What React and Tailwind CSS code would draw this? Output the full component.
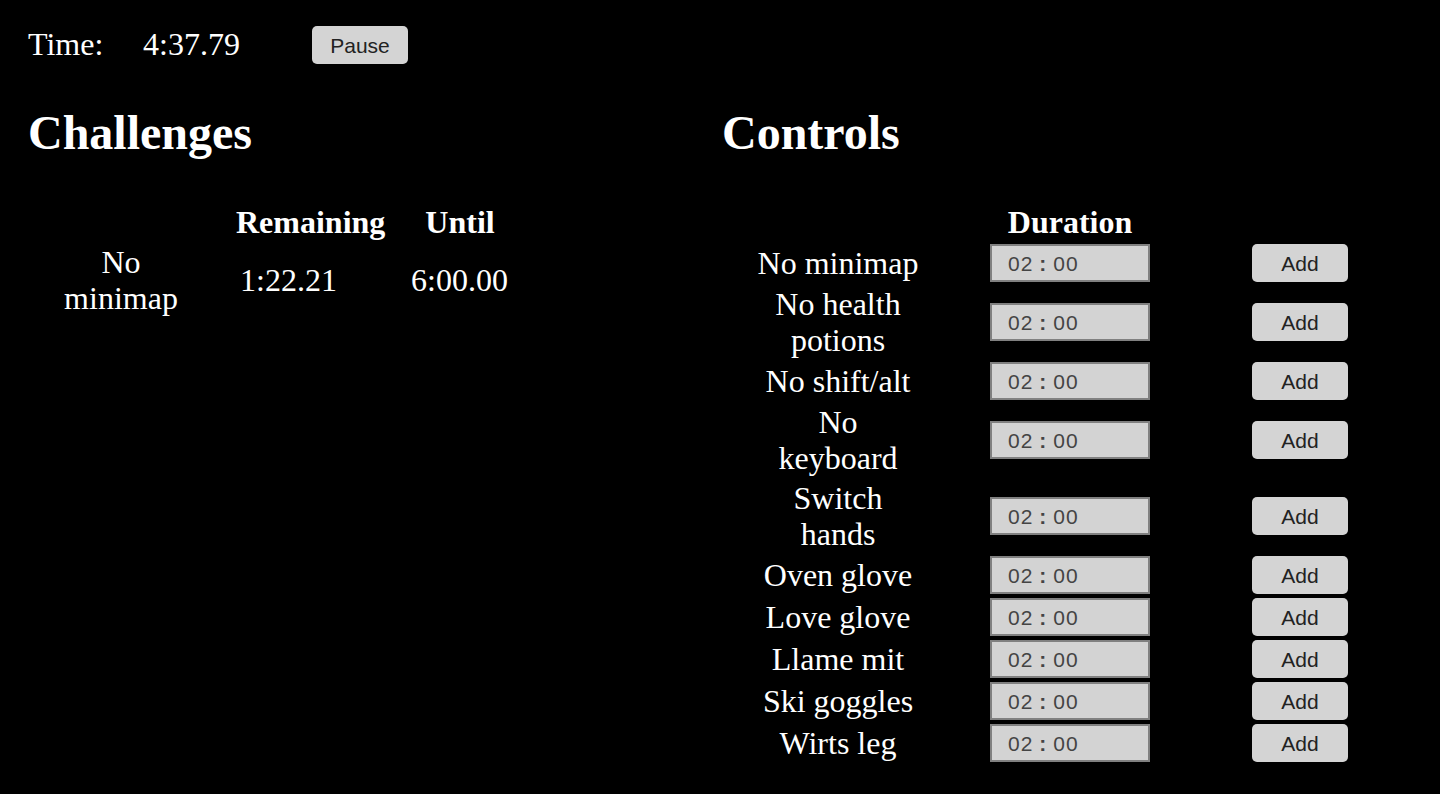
const controls = [
  'No minimap',
  'No health potions',
  'No shift/alt',
  'No keyboard',
  'Switch hands',
  'Oven glove',
  'Love glove',
  'Llame mit',
  'Ski goggles',
  'Wirts leg',
]

function GrayButton({ children, className = '' }) {
  return (
    <button
      className={`block h-[38px] w-[96px] rounded-[5px] bg-[#d4d4d4] font-['Liberation_Sans',Arial,sans-serif] text-[21px] leading-none text-[#222] ${className}`}
    >
      {children}
    </button>
  )
}

// looks like a time input showing 02:00
function DurationInput() {
  return (
    <div className="mx-auto box-border flex h-[38px] w-[160px] items-center border-2 border-[#808080] bg-[#d3d3d3] pl-[16px] font-['Liberation_Sans',Arial,sans-serif] text-[21px] leading-none tracking-[1px] text-[#444]">
      <span>02</span>
      <span className="mx-[6px] font-bold">:</span>
      <span>00</span>
    </div>
  )
}

export default function App() {
  return (
    <div className="min-h-screen bg-black font-['Liberation_Serif','Times_New_Roman',serif] text-[32px] leading-[36px] text-white">
      <div className="flex h-[64px] items-start pl-[28px] pt-[26px]">
        <span className="w-[115px]">Time:</span>
        <span className="w-[169px]">4:37.79</span>
        <GrayButton>Pause</GrayButton>
      </div>

      <div className="mt-[41px] flex">
        {/* challenges */}
        <div className="w-[722px] pl-[28px]">
          <h1 className="text-[48px] font-bold leading-[55px]">Challenges</h1>
          <table className="mt-[42px] border-separate border-spacing-0">
            <thead>
              <tr>
                <th className="w-[186px] py-[2px]"></th>
                <th className="w-[182px] py-[2px] pl-[22px] text-left">Remaining</th>
                <th className="w-[114px] py-[2px] pl-[14px] text-center">Until</th>
              </tr>
            </thead>
            <tbody>
              <tr>
                <td className="py-[2px] text-center">
                  <div className="mx-auto w-[130px]">No minimap</div>
                </td>
                <td className="py-[2px] pl-[26px]">1:22.21</td>
                <td className="py-[2px] pl-[15px]">6:00.00</td>
              </tr>
            </tbody>
          </table>
        </div>

        {/* controls */}
        <div className="flex-1">
          <h1 className="text-[48px] font-bold leading-[55px]">Controls</h1>
          <table className="mt-[42px] border-separate border-spacing-0">
            <thead>
              <tr>
                <th className="w-[232px] py-[2px]"></th>
                <th className="w-[232px] py-[2px] text-center">Duration</th>
                <th className="w-[228px] py-[2px]"></th>
              </tr>
            </thead>
            <tbody>
              {controls.map((c) => (
                <tr key={c}>
                  <td className="py-[2px] text-center">
                    <div className="mx-auto w-[164px]">{c}</div>
                  </td>
                  <td className="py-[2px]">
                    <DurationInput />
                  </td>
                  <td className="py-[2px]">
                    <GrayButton className="mx-auto">Add</GrayButton>
                  </td>
                </tr>
              ))}
            </tbody>
          </table>
        </div>
      </div>
    </div>
  )
}
